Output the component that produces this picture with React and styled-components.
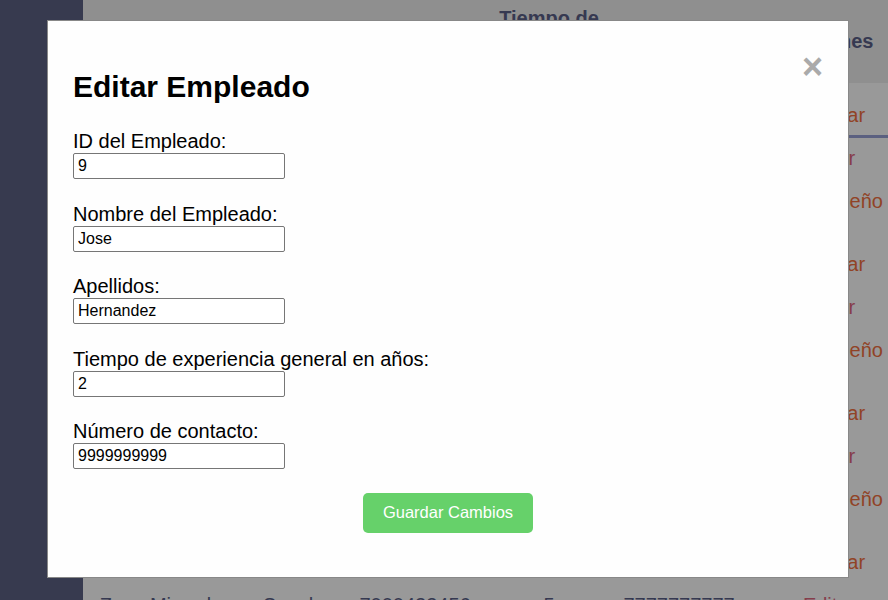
import styled, { createGlobalStyle } from "styled-components";

const GlobalStyle = createGlobalStyle`
  html, body {
    margin: 0;
    height: 100%;
    overflow: hidden;
  }
  body {
    font-family: "Liberation Sans", Arial, sans-serif;
  }
`;

const COLUMNS = "68px 70px 162px 64px 204px 56px 244px";

const Page = styled.div`
  display: flex;
  height: 100vh;
`;

const Sidebar = styled.aside`
  width: 83px;
  flex-shrink: 0;
  background: #5d6184;
`;

const Main = styled.main`
  flex: 1;
  overflow: hidden;
  background: #fff;
`;

const Table = styled.div`
  width: 868px;
`;

const HeadRow = styled.div`
  display: grid;
  grid-template-columns: ${COLUMNS};
  height: 83px;
  align-items: center;
  justify-items: center;
  background: #eee;
  color: #5a5f88;
  font-size: 20px;
  font-weight: bold;
  text-align: center;
`;

const Row = styled.div`
  display: grid;
  grid-template-columns: ${COLUMNS};
  padding: 21px 0 19px;
  align-items: center;
  justify-items: center;
  color: #5a5f88;
  font-size: 20px;
  white-space: nowrap;
`;

const Actions = styled.div`
  display: flex;
  flex-direction: column;
  align-items: center;
  gap: 20px;
`;

const actionColors = {
  delete: "#f27040",
  edit: "#e0667e",
  perf: "#f27040",
};

const ActionLink = styled.a`
  position: relative;
  color: ${(p) => actionColors[p.$kind]};
  text-decoration: none;
  cursor: pointer;

  ${(p) =>
    p.$active &&
    `
    &::after {
      content: "";
      position: absolute;
      left: 50%;
      bottom: -11px;
      width: 240px;
      height: 3px;
      transform: translateX(-50%);
      background: #98a1d5;
    }
  `}
`;

const Backdrop = styled.div`
  position: fixed;
  inset: 0;
  background: rgba(0, 0, 0, 0.4);
  z-index: 10;
`;

const ModalLayer = styled.div`
  position: fixed;
  inset: 0;
  padding: 20px 0 0 47px;
  z-index: 20;
`;

const Modal = styled.div`
  width: 802px;
  box-sizing: border-box;
  background: #fefefe;
  border: 1px solid #888;
  padding: 20px 25px 44px;
  color: #000;
`;

const Close = styled.span`
  float: right;
  margin-top: 8px;
  color: #aaa;
  font-size: 36px;
  font-weight: bold;
  line-height: 1;
  cursor: pointer;
`;

const Title = styled.h2`
  margin: 29px 0 26px;
  font-size: 30px;
  font-weight: bold;
`;

const Field = styled.div`
  margin-bottom: 23.5px;
`;

const Label = styled.label`
  display: block;
  font-size: 20px;
  line-height: 23px;
`;

const Input = styled.input`
  display: block;
  width: 212px;
  height: 26px;
  box-sizing: border-box;
  padding: 0 4px;
  border: 1px solid #767676;
  border-radius: 2px;
  font-family: "Liberation Sans", Arial, sans-serif;
  font-size: 16px;
  color: #000;
`;

const SaveButton = styled.button`
  display: block;
  margin: 0 auto;
  height: 40px;
  padding: 0 20px;
  border: none;
  border-radius: 5px;
  background: #66d16a;
  color: #fff;
  font-family: "Liberation Sans", Arial, sans-serif;
  font-size: 16.5px;
  cursor: pointer;
`;

const headers = [
  "Nombre",
  "Paterno",
  "Materno",
  "ID",
  "Tiempo de experiencia general en años",
  "Contacto",
  "Acciones",
];

const employees = [
  ["Jose", "Hernandez", "Lopez", "9", "2", "9999999999"],
  ["Ana", "Lopez", "Diaz", "7000123456", "3", "8888888888"],
  ["Luis", "Perez", "Gomez", "7000234567", "4", "6666666666"],
  ["Zoe", "Miranda", "Sanchez", "7000423456", "5", "7777777777"],
];

const fields = [
  ["ID del Empleado:", "9"],
  ["Nombre del Empleado:", "Jose"],
  ["Apellidos:", "Hernandez"],
  ["Tiempo de experiencia general en años:", "2"],
  ["Número de contacto:", "9999999999"],
];

export default function App() {
  return (
    <>
      <GlobalStyle />
      <Page>
        <Sidebar />
        <Main>
          <Table>
            <HeadRow>
              {headers.map((h) => (
                <div key={h}>{h}</div>
              ))}
            </HeadRow>
            {employees.map((emp, i) => (
              <Row key={emp[3]}>
                {emp.map((v, j) => (
                  <div key={j}>{v}</div>
                ))}
                <Actions>
                  <ActionLink $kind="delete" $active={i === 0}>
                    Eliminar
                  </ActionLink>
                  <ActionLink $kind="edit">Editar</ActionLink>
                  <ActionLink $kind="perf">Desempeño</ActionLink>
                </Actions>
              </Row>
            ))}
          </Table>
        </Main>
      </Page>
      <Backdrop />
      <ModalLayer>
        <Modal>
          <Close>&times;</Close>
          <Title>Editar Empleado</Title>
          <form onSubmit={(e) => e.preventDefault()}>
            {fields.map(([label, value]) => (
              <Field key={label}>
                <Label>{label}</Label>
                <Input type="text" defaultValue={value} />
              </Field>
            ))}
            <SaveButton type="submit">Guardar Cambios</SaveButton>
          </form>
        </Modal>
      </ModalLayer>
    </>
  );
}
